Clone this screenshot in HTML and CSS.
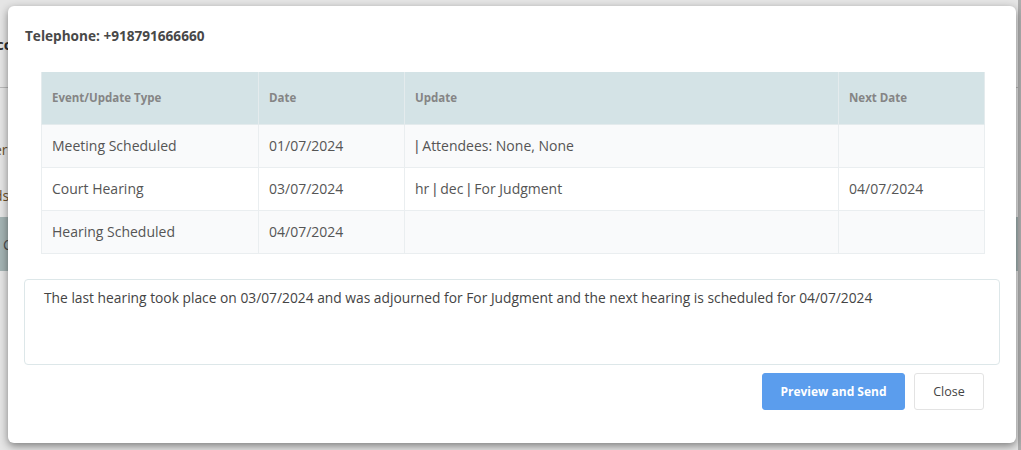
FILE: index.html
```html
<!DOCTYPE html>
<html>
<head>
<meta charset="utf-8">
<link rel="stylesheet" href="styles.css">
</head>
<body>
<div class="page">
  <div class="page-head"><span class="page-title">co</span></div>
  <div class="page-row first">er</div>
  <div class="page-row">ds</div>
  <div class="page-band">C</div>
  <div class="page-rest"></div>
</div>
<div class="backdrop"></div>
<div class="modal">
  <div class="modal-title">Telephone: +918791666660</div>
  <table class="events">
    <colgroup>
      <col class="c1"><col class="c2"><col class="c3"><col class="c4">
    </colgroup>
    <thead>
      <tr><th>Event/Update Type</th><th>Date</th><th>Update</th><th>Next Date</th></tr>
    </thead>
    <tbody>
      <tr><td>Meeting Scheduled</td><td>01/07/2024</td><td><span class="sep">|</span> Attendees: None, None</td><td></td></tr>
      <tr><td>Court Hearing</td><td>03/07/2024</td><td>hr <span class="sep">|</span> dec <span class="sep">|</span> For Judgment</td><td>04/07/2024</td></tr>
      <tr><td>Hearing Scheduled</td><td>04/07/2024</td><td></td><td></td></tr>
    </tbody>
  </table>
  <div class="summary">The last hearing took place on 03/07/2024 and was adjourned for For Judgment and the next hearing is scheduled for 04/07/2024</div>
  <div class="actions">
    <button class="btn btn-primary">Preview and Send</button>
    <button class="btn btn-default">Close</button>
  </div>
</div>
</body>
</html>
```
FILE: styles.css
```css
html, body {
  margin: 0;
  padding: 0;
  width: 1021px;
  height: 450px;
  overflow: hidden;
  font-family: "Open Sans", "Liberation Sans", sans-serif;
}
body {
  background: #ffffff;
  position: relative;
}
.page {
  display: flex;
  flex-direction: column;
  height: 450px;
  box-sizing: border-box;
  background: #fff;
  border-right: 3px solid #c2c2c2;
}
.page-head {
  height: 87px;
  border-bottom: 1px solid #cfcfcf;
  display: flex;
  align-items: center;
}
.page-title {
  font-weight: bold;
  font-size: 15px;
  color: #333;
  margin-left: -4px;
}
.page-row {
  height: 44px;
  display: flex;
  align-items: center;
  font-size: 14px;
  color: #7a5c2e;
  margin-left: -6px;
}
.page-row.first {
  margin-top: 37px;
  height: 48px;
}
.page-band {
  height: 54px;
  background: #b7c8c8;
  display: flex;
  align-items: center;
  font-size: 14px;
  color: #555;
  padding-left: 3px;
}
.page-rest {
  flex: 1;
  background: #fff;
}
.backdrop {
  position: absolute;
  inset: 0;
  background: rgba(0, 0, 0, 0.1);
}
.modal {
  position: absolute;
  left: 8px;
  top: 6px;
  width: 1008px;
  height: 437px;
  box-sizing: border-box;
  background: #fff;
  border-radius: 6px;
  box-shadow: 0 3px 9px rgba(0, 0, 0, 0.45);
  padding: 21px 16px 0 16px;
  display: flex;
  flex-direction: column;
}
.modal-title {
  font-size: 13.6px;
  line-height: 18px;
  font-weight: bold;
  color: #484848;
  padding-left: 1px;
}
.events {
  margin: 27px 16px 0 17px;
  border-collapse: collapse;
  table-layout: fixed;
  width: 943px;
  font-size: 14px;
}
.c1 { width: 217px; }
.c2 { width: 146px; }
.c3 { width: 434px; }
.c4 { width: 146px; }
.events th {
  background: #d4e3e6;
  color: #858585;
  font-size: 11.5px;
  font-weight: bold;
  text-align: left;
  height: 52px;
  padding: 0 10px;
  box-sizing: border-box;
  border: 1px solid #e4ebed;
  border-top: 0;
}
.events td {
  height: 43px;
  padding: 0 10px;
  box-sizing: border-box;
  color: #555;
  border: 1px solid #eaeef0;
}
.sep {
  font-family: "Liberation Sans", sans-serif;
  color: #555;
}
.events tbody tr:nth-child(odd) td { background: #f9fafb; }
.events tbody tr:nth-child(even) td { background: #fff; }
.summary {
  margin-top: 25px;
  height: 86px;
  box-sizing: border-box;
  border: 1px solid #dde7e9;
  border-radius: 4px;
  padding: 8px 19px;
  font-size: 13.8px;
  line-height: 20px;
  color: #444;
}
.actions {
  margin-top: 8px;
  display: flex;
  justify-content: flex-end;
  gap: 9px;
  padding-right: 16px;
}
.btn {
  height: 37px;
  border-radius: 3px;
  font-family: inherit;
  cursor: pointer;
}
.btn-primary {
  width: 143px;
  background: #5b9ded;
  border: 1px solid #5b9ded;
  color: #fff;
  font-weight: bold;
  font-size: 12px;
}
.btn-default {
  width: 70px;
  background: #fff;
  border: 1px solid #e3e3e3;
  color: #444;
  font-size: 12.5px;
}
```
